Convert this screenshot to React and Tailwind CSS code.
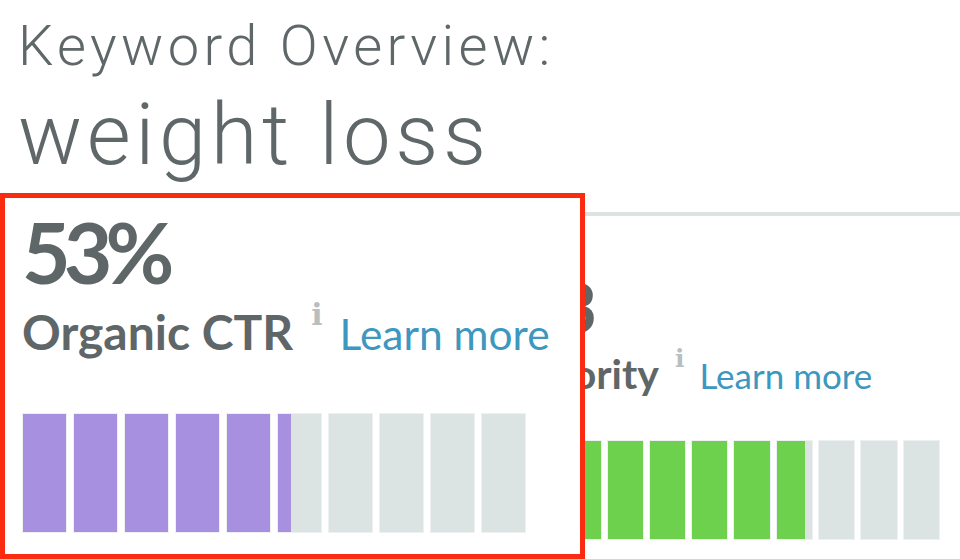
import React from 'react';

const metrics = {
  ctr: { value: '53%', label: 'Organic CTR', pct: 53, color: '#a690df' },
  priority: { value: '63', label: 'Priority', pct: 68, color: '#6dd14e' },
};

const sizes = {
  large: {
    value: 'text-[84px] leading-none font-bold tracking-[-7px]',
    labelRow: 'mt-[14px] flex items-baseline',
    label: 'text-[48px] leading-none font-bold',
    info: 'ml-[18px] mt-[-8px] self-start text-[30px] leading-none',
    link: 'ml-[17px] text-[42.5px] leading-none',
    bars: 'mt-[57px] flex gap-[6px]',
    bar: 'h-[120px] w-[45px]',
  },
  small: {
    value: 'text-[69px] leading-none font-bold tracking-[-5px]',
    labelRow: 'mt-[12px] flex items-baseline',
    label: 'text-[41px] leading-none font-bold',
    info: 'ml-[16px] mt-[-7px] self-start text-[25px] leading-none',
    link: 'ml-[15px] text-[35px] leading-none',
    bars: 'mt-[46px] flex gap-[5px]',
    bar: 'h-[100px] w-[37.3px]',
  },
};

const Bars = ({ pct, color, cls }) => {
  const filled = (pct / 100) * 10;
  return (
    <div className={cls.bars}>
      {Array.from({ length: 10 }).map((_, i) => {
        const f = Math.max(0, Math.min(1, filled - i));
        return (
          <div key={i} className={`${cls.bar} overflow-hidden border border-white/50 bg-[#dce3e3]`}>
            <div className="h-full" style={{ width: `${f * 100}%`, background: color }} />
          </div>
        );
      })}
    </div>
  );
};

const MetricCard = ({ metric, size }) => {
  const cls = sizes[size];
  return (
    <div className="font-['Lato','Liberation_Sans',sans-serif] text-[#5f6668]">
      <div className={cls.value}>{metric.value}</div>
      <div className={cls.labelRow}>
        <span className={cls.label}>{metric.label}</span>
        <span className={`${cls.info} font-['DejaVu_Serif',serif] font-bold text-[#b9bebf]`}>i</span>
        <a className={`${cls.link} text-[#3d97bf]`}>Learn more</a>
      </div>
      <Bars pct={metric.pct} color={metric.color} cls={cls} />
    </div>
  );
};

export default function App() {
  return (
    <div className="h-[559px] w-[960px] overflow-hidden bg-white">
      <header className="h-[193px] pl-[18px] pt-[18px] font-['Roboto','Noto_Sans',sans-serif] font-light text-[#5f6769]">
        <h1 className="text-[56px] leading-none tracking-[4.4px]">Keyword Overview:</h1>
        <h2 className="mt-[19px] text-[85px] leading-none tracking-[4.6px]">weight loss</h2>
      </header>
      <div className="flex">
        <section className="relative z-10 h-[366px] w-[585px] shrink-0 border-[5px] border-[#fb2b11] bg-white pl-[17px] pt-[12px]">
          <MetricCard metric={metrics.ctr} size="large" />
        </section>
        <section className="ml-[-63px] mt-[19px] flex-1 border-t-4 border-[#dde3e3] pt-[56px]">
          <MetricCard metric={metrics.priority} size="small" />
        </section>
      </div>
    </div>
  );
}
